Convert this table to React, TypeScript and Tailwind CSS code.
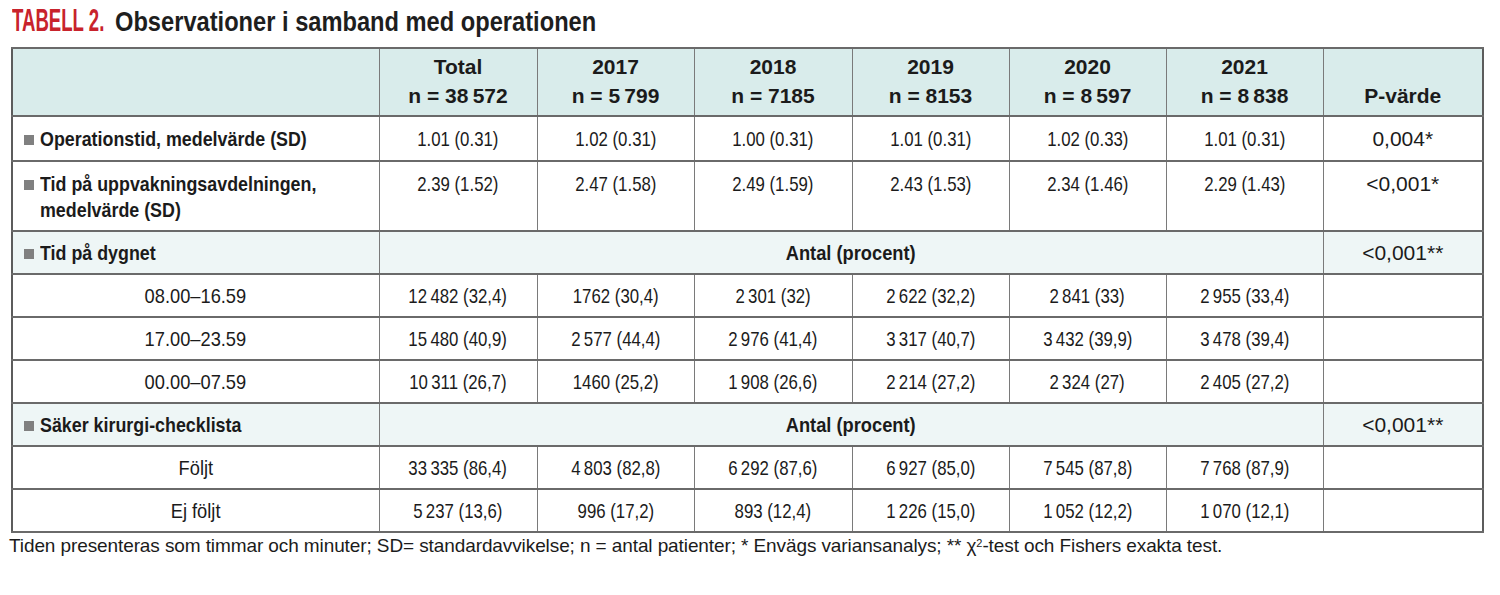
import React from 'react';

const T = '\u2009';

const header = [
  ['Total', `n = 38${T}572`],
  ['2017', `n = 5${T}799`],
  ['2018', 'n = 7185'],
  ['2019', 'n = 8153'],
  ['2020', `n = 8${T}597`],
  ['2021', `n = 8${T}838`],
];

type Row =
  | { kind: 'stat'; label: string[]; values: string[]; p: string; tall?: boolean }
  | { kind: 'section'; label: string; p: string }
  | { kind: 'sub'; label: string; values: string[] };

const rows: Row[] = [
  {
    kind: 'stat',
    label: ['Operationstid, medelvärde (SD)'],
    values: ['1.01 (0.31)', '1.02 (0.31)', '1.00 (0.31)', '1.01 (0.31)', '1.02 (0.33)', '1.01 (0.31)'],
    p: '0,004*',
  },
  {
    kind: 'stat',
    label: ['Tid på uppvakningsavdelningen,', 'medelvärde (SD)'],
    values: ['2.39 (1.52)', '2.47 (1.58)', '2.49 (1.59)', '2.43 (1.53)', '2.34 (1.46)', '2.29 (1.43)'],
    p: '<0,001*',
    tall: true,
  },
  { kind: 'section', label: 'Tid på dygnet', p: '<0,001**' },
  {
    kind: 'sub',
    label: '08.00–16.59',
    values: [`12${T}482 (32,4)`, '1762 (30,4)', `2${T}301 (32)`, `2${T}622 (32,2)`, `2${T}841 (33)`, `2${T}955 (33,4)`],
  },
  {
    kind: 'sub',
    label: '17.00–23.59',
    values: [`15${T}480 (40,9)`, `2${T}577 (44,4)`, `2${T}976 (41,4)`, `3${T}317 (40,7)`, `3${T}432 (39,9)`, `3${T}478 (39,4)`],
  },
  {
    kind: 'sub',
    label: '00.00–07.59',
    values: [`10${T}311 (26,7)`, '1460 (25,2)', `1${T}908 (26,6)`, `2${T}214 (27,2)`, `2${T}324 (27)`, `2${T}405 (27,2)`],
  },
  { kind: 'section', label: 'Säker kirurgi-checklista', p: '<0,001**' },
  {
    kind: 'sub',
    label: 'Följt',
    values: [`33${T}335 (86,4)`, `4${T}803 (82,8)`, `6${T}292 (87,6)`, `6${T}927 (85,0)`, `7${T}545 (87,8)`, `7${T}768 (87,9)`],
  },
  {
    kind: 'sub',
    label: 'Ej följt',
    values: [`5${T}237 (13,6)`, '996 (17,2)', '893 (12,4)', `1${T}226 (15,0)`, `1${T}052 (12,2)`, `1${T}070 (12,1)`],
  },
];

const cell = 'border-x border-x-[#7a7a7a] border-y-2 border-y-[#6a6a6a] text-center';

// condensed look: the narrow face isn't installed, so squeeze the glyphs
const Num = ({ children }: { children: React.ReactNode }) => (
  <span className="inline-block whitespace-nowrap scale-x-[0.8]">{children}</span>
);
const Mid = ({ children }: { children: React.ReactNode }) => (
  <span className="inline-block whitespace-nowrap scale-x-[0.87]">{children}</span>
);
const Label = ({ lines }: { lines: string[] }) => (
  <div className="flex items-start">
    <span className="shrink-0 w-[10px] h-[10px] mt-[9px] mr-[6px] bg-[#808080]" />
    <div>
      {lines.map((l) => (
        <div key={l} className="whitespace-nowrap origin-left scale-x-[0.85]">
          {l}
        </div>
      ))}
    </div>
  </div>
);

export default function App() {
  return (
    <div className="w-[1500px] h-[595px] bg-white text-[#1b1b1b] font-['Liberation_Sans',sans-serif] overflow-hidden">
      <h1 className="flex items-baseline pl-[12px] pt-[5px] h-[47px] text-[31px] leading-[32px] font-bold">
        <span className="w-[103px] shrink-0">
          <span className="inline-block origin-left scale-x-[0.6] text-[#c8232c] whitespace-nowrap">TABELL 2.</span>
        </span>
        <span className="inline-block origin-left scale-x-[0.845] text-[28px] text-[#1e1e1e] whitespace-nowrap">
          Observationer i samband med operationen
        </span>
      </h1>

      <table className="ml-[11px] w-[1471px] border-collapse border-2 border-[#5c5c5c] table-fixed">
        <colgroup>
          <col className="w-[367px]" />
          <col className="w-[158px]" />
          <col className="w-[157px]" />
          <col className="w-[158px]" />
          <col className="w-[157px]" />
          <col className="w-[157px]" />
          <col className="w-[157px]" />
          <col className="w-[160px]" />
        </colgroup>
        <thead>
          <tr className="h-[68px] bg-[#d9eceb]">
            <th className={cell} />
            {header.map(([year, n]) => (
              <th key={year} className={`${cell} align-bottom pb-[5px] text-[21px] leading-[29px] font-bold`}>
                <div>{year}</div>
                <div>{n}</div>
              </th>
            ))}
            <th className={`${cell} align-bottom pb-[5px] text-[21px] leading-[29px] font-bold`}>P-värde</th>
          </tr>
        </thead>
        <tbody className="text-[21px] leading-[26px]">
          {rows.map((row, i) => {
            if (row.kind === 'section') {
              return (
                <tr key={i} className="h-[43px] bg-[#eef6f6]">
                  <td className={`${cell} text-left pl-[11px] font-bold`}>
                    <Label lines={[row.label]} />
                  </td>
                  <td colSpan={6} className={`${cell} font-bold`}>
                    <Mid>Antal (procent)</Mid>
                  </td>
                  <td className={cell}>{row.p}</td>
                </tr>
              );
            }
            if (row.kind === 'sub') {
              return (
                <tr key={i} className="h-[43px]">
                  <td className={cell}>
                    <Mid>{row.label}</Mid>
                  </td>
                  {row.values.map((v, j) => (
                    <td key={j} className={cell}>
                      <Num>{v}</Num>
                    </td>
                  ))}
                  <td className={cell} />
                </tr>
              );
            }
            return (
              <tr key={i} className={row.tall ? 'h-[70px]' : 'h-[45px]'}>
                <td className={`${cell} text-left pl-[11px] align-top pt-[9px] font-bold`}>
                  <Label lines={row.label} />
                </td>
                {row.values.map((v, j) => (
                  <td key={j} className={`${cell} align-top pt-[9px]`}>
                    <Num>{v}</Num>
                  </td>
                ))}
                <td className={`${cell} align-top pt-[9px]`}>{row.p}</td>
              </tr>
            );
          })}
        </tbody>
      </table>

      <p className="pl-[9px] pt-[2px] text-[19px] leading-[22px] tracking-[-0.1px]">
        Tiden presenteras som timmar och minuter; SD= standardavvikelse; n = antal patienter; * Envägs variansanalys; ** χ
        <sup className="text-[11px]">2</sup>-test och Fishers exakta test.
      </p>
    </div>
  );
}
